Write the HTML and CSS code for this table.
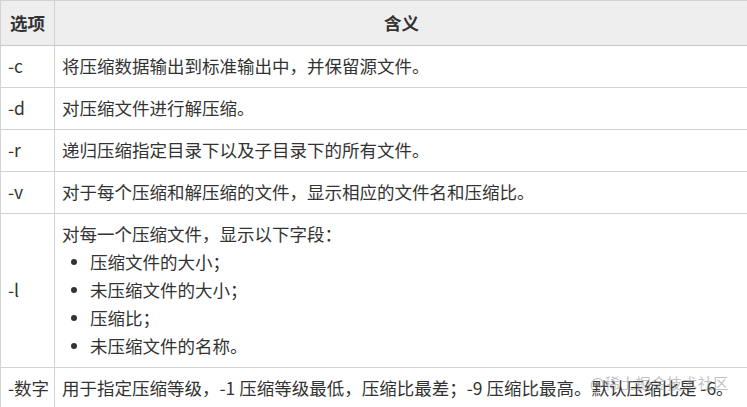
FILE: index.html
```html
<!DOCTYPE html>
<html lang="zh-CN">
<head>
<meta charset="utf-8">
<link rel="stylesheet" href="styles.css">
</head>
<body>
<div class="wrap">
<table class="opts">
  <thead>
    <tr><th class="c1">选项</th><th class="c2">含义</th></tr>
  </thead>
  <tbody>
    <tr><td class="c1">-c</td><td>将压缩数据输出到标准输出中，并保留源文件。</td></tr>
    <tr><td class="c1">-d</td><td>对压缩文件进行解压缩。</td></tr>
    <tr><td class="c1">-r</td><td>递归压缩指定目录下以及子目录下的所有文件。</td></tr>
    <tr><td class="c1">-v</td><td>对于每个压缩和解压缩的文件，显示相应的文件名和压缩比。</td></tr>
    <tr><td class="c1">-l</td><td>对每一个压缩文件，显示以下字段：
      <ul class="fields">
        <li>压缩文件的大小；</li>
        <li>未压缩文件的大小；</li>
        <li>压缩比；</li>
        <li>未压缩文件的名称。</li>
      </ul></td></tr>
    <tr><td class="c1">-数字</td><td>用于指定压缩等级，-1 压缩等级最低，压缩比最差；-9 压缩比最高。默认压缩比是 -6。</td></tr>
  </tbody>
</table>
<div class="mark">@稀土掘金技术社区</div>
</div>
</body>
</html>
```
FILE: styles.css
```css
html, body {
  margin: 0;
  padding: 0;
  background: #fff;
}
body {
  font-family: "Noto Sans CJK SC", "Microsoft YaHei", sans-serif;
  font-size: 17.5px;
  line-height: 28px;
  color: #333;
  overflow: hidden;
}
.wrap {
  position: relative;
  width: 747px;
  height: 407px;
  overflow: hidden;
}
.opts {
  border-collapse: collapse;
  width: 749px;
  table-layout: fixed;
}
.opts th, .opts td {
  border: 1px solid #d2d2d2;
  text-align: left;
  vertical-align: middle;
  padding: 6px 7px 7px 7px;
  font-weight: normal;
}
.opts th {
  background: #eeeeee;
  font-weight: bold;
  text-align: center;
  padding: 8px 7px;
  border-bottom-color: #c8c8c8;
  color: #333;
}
.opts .c1 {
  width: 41px;
  padding-left: 7px;
  padding-right: 6px;
  white-space: nowrap;
}
.opts th.c1 { text-align: center; padding-left: 6px; padding-right: 6px; }
.fields {
  list-style: none;
  margin: 0;
  padding: 0 0 0 9px;
}
.fields li {
  display: flex;
  align-items: center;
}
.fields li::before {
  content: "";
  width: 6px;
  height: 6px;
  border-radius: 50%;
  background: #333;
  margin-right: 13px;
  flex: none;
}
.mark {
  position: absolute;
  left: 590px;
  top: 373px;
  font-size: 15px;
  line-height: 20px;
  color: rgba(140, 140, 140, 0.55);
  letter-spacing: 0.5px;
}
```
